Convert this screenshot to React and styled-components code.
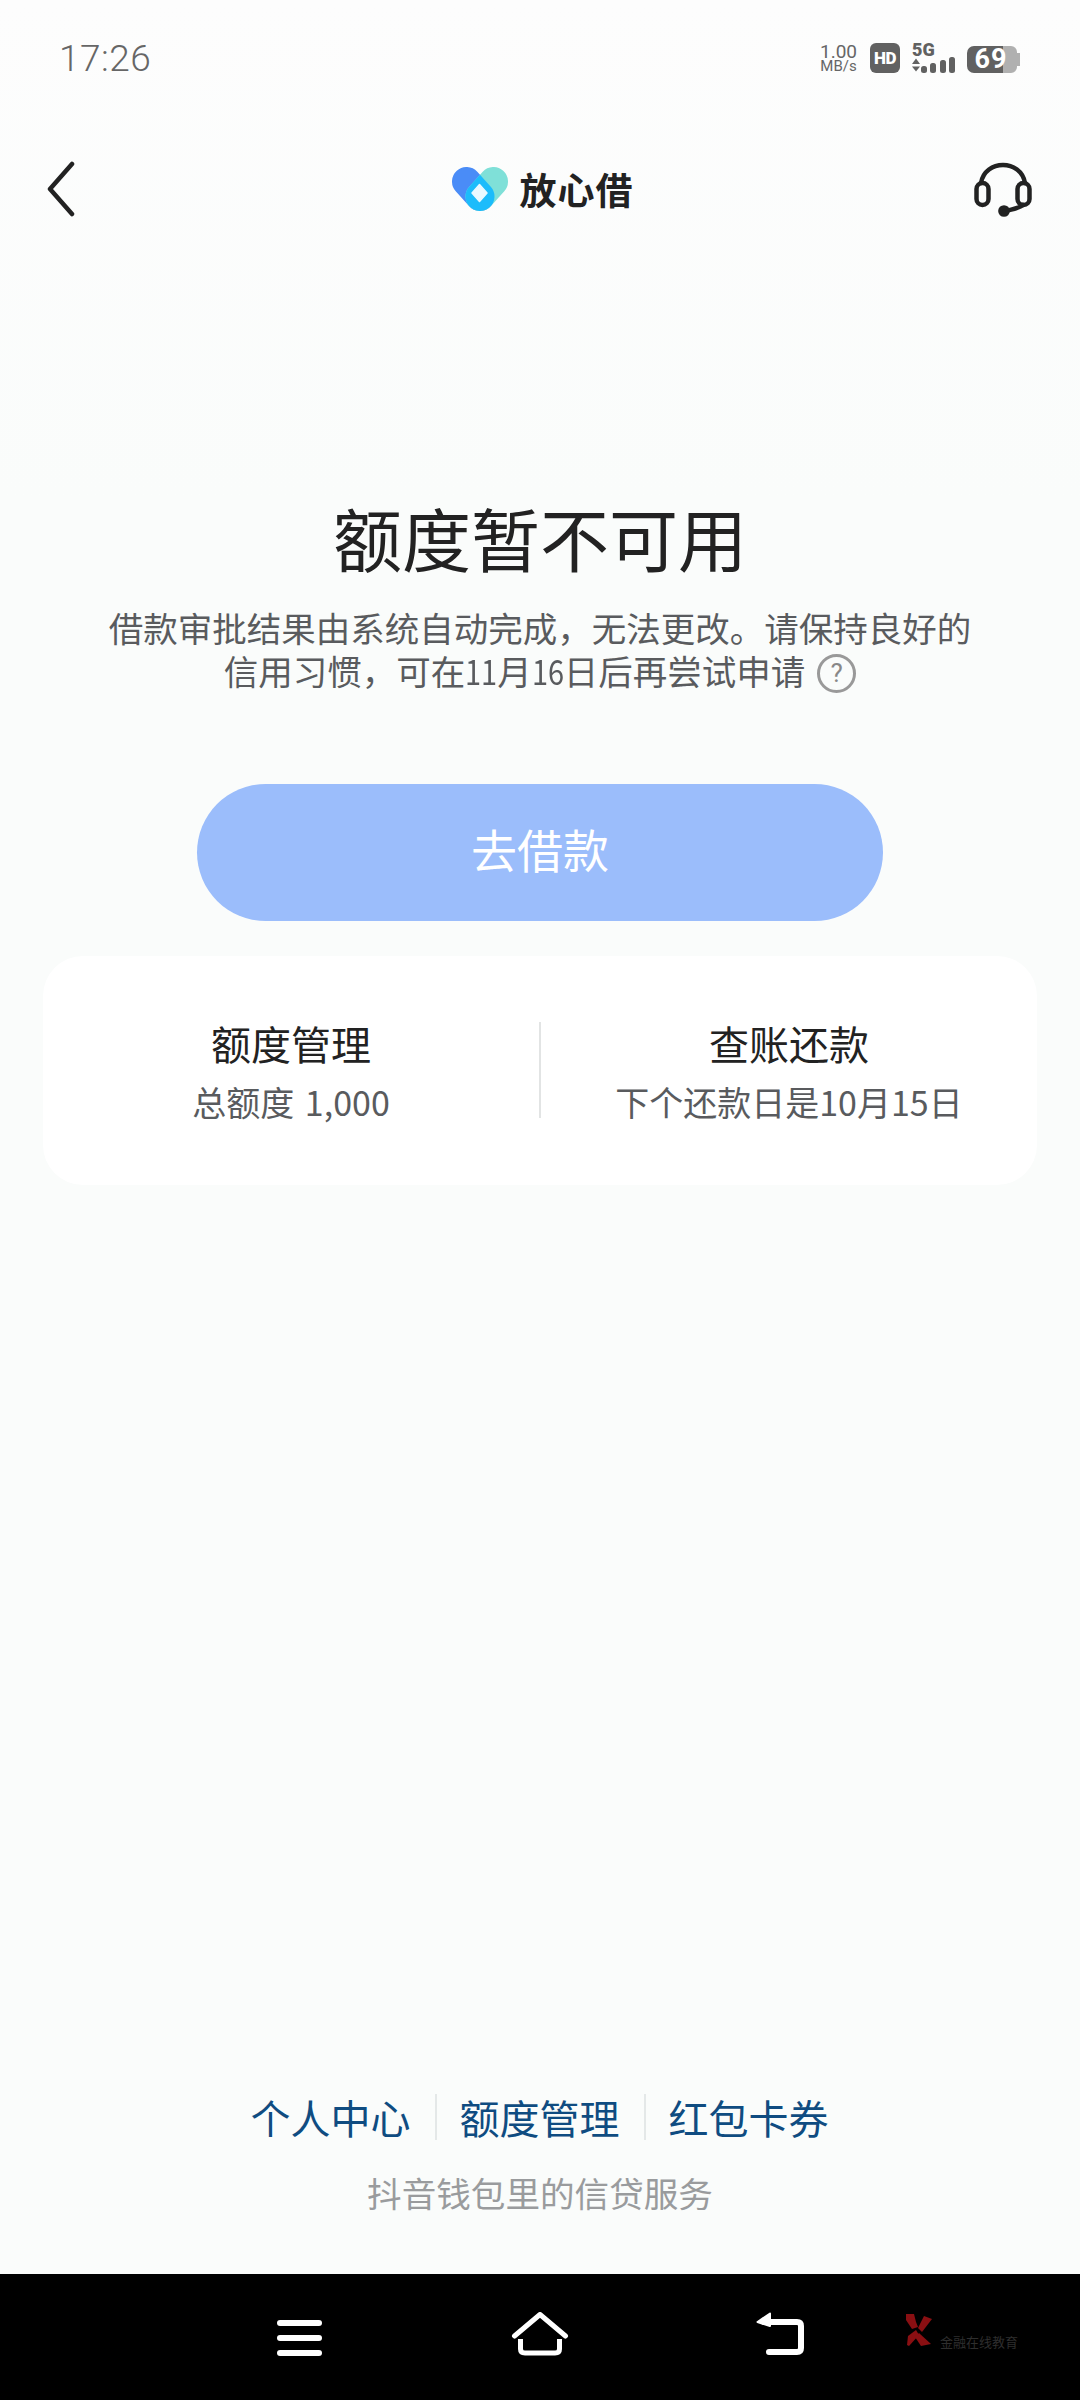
import React from "react";
import styled, { createGlobalStyle } from "styled-components";

const Global = createGlobalStyle`
  html, body { margin: 0; padding: 0; background: #fafcfb; }
  * { box-sizing: border-box; }
`;
const CJK = `"Noto Sans CJK SC", "Noto Sans", sans-serif`;

const Page = styled.div`
  width: 1080px; height: 2400px; display: flex; flex-direction: column;
  background: linear-gradient(#fdfdfd 0, #fafcfb 500px); font-family: ${CJK}; overflow: hidden;
`;
const StatusBar = styled.div`
  height: 116px; display: flex; align-items: center; justify-content: space-between;
  padding: 0 59px 0 59px; color: #666;
`;
const Time = styled.span`
  font: 300 37px/1 Roboto, sans-serif; letter-spacing: 0.5px; color: #666;
`;
const StatusIcons = styled.div`display: flex; align-items: flex-end; gap: 12px; height: 30px;`;
const Speed = styled.div`
  display: flex; flex-direction: column; align-items: center; width: 39px;
  font-family: Roboto, sans-serif; color: #666; font-weight: 400;
  span:first-child { font-size: 19px; line-height: 17px; }
  span:last-child { font-size: 15px; line-height: 13px; }
`;
const HdBadge = styled.div`
  width: 30px; height: 30px; border-radius: 6px; background: #616161; color: #fff;
  display: flex; align-items: center; justify-content: center;
  font: 900 17px/1 Roboto, sans-serif; letter-spacing: -0.5px;
`;
const SignalBox = styled.div`position: relative; width: 46px; height: 30px; display: flex;`;
const SignalLabel = styled.span`
  position: absolute; left: 0; top: -1px; font: 900 18px/16px Roboto, sans-serif; color: #616161;
`;
const BatteryBox = styled.div`
  position: relative; width: 54px; height: 27px; margin-left: -3px;
`;
const BatteryNum = styled.span`
  position: absolute; left: 7px; top: 0; width: 34px; text-align: center;
  font: 700 27px/27px Roboto, sans-serif; color: #fff; letter-spacing: 1px;
`;
const Nav = styled.header`
  height: 146px; display: grid; grid-template-columns: 1fr auto 1fr; align-items: center;
  padding: 0 47px 0 45px;
`;
const NavEnd = styled.div`justify-self: end; display: flex;`;
const NavStart = styled.div`justify-self: start; display: flex;`;
const Brand = styled.div`display: flex; align-items: center; gap: 12px; margin-left: 7px;`;
const BrandName = styled.span`
  font: 700 37px/1 ${CJK}; color: #222; letter-spacing: 1px;
`;
const Main = styled.main`
  display: flex; flex-direction: column; align-items: center; padding-top: 228px;
`;
const Title = styled.h1`
  margin: 0; font: 400 69px/94px ${CJK}; color: #222;
`;
const Desc = styled.p`
  margin: 22px 0 0; width: 900px; text-align: center;
  font: 400 34.5px/43px ${CJK}; color: #595b5e;
`;
const Digits = styled.span`
  display: inline-block; width: 32px; white-space: nowrap;
  transform: scaleX(0.84); transform-origin: left center;
`;
const HelpIcon = styled.span`
  display: inline-flex; align-items: center; justify-content: center; vertical-align: 3px;
  width: 39px; height: 39px; margin-left: 12px; border-radius: 50%; border: 3px solid #999;
  font: 400 26px/1 Roboto, sans-serif; color: #888;
`;
const BorrowButton = styled.button`
  width: 686px; height: 137px; margin-top: 91px; padding: 0 0 8px; border: 0; border-radius: 69px;
  background: #9bbdfb; color: #fff; font: 400 46px/1 ${CJK};
`;
const Card = styled.section`
  width: 994px; height: 229px; margin-top: 35px; border-radius: 40px; background: #fff;
  display: grid; grid-template-columns: 1fr 2px 1fr; align-items: center;
`;
const Divider = styled.div`width: 2px; height: 96px; background: #e2e4e4;`;
const CardCell = styled.div`
  display: flex; flex-direction: column; align-items: center;
`;
const CellTitle = styled.div`font: 400 40px/56px ${CJK}; color: #222;`;
const CellSub = styled.div`font: 400 34px/46px ${CJK}; color: #595b5e; margin-top: 8px; word-spacing: 3px;`;
const Footer = styled.footer`
  margin-top: auto; display: flex; flex-direction: column; align-items: center; padding-bottom: 58px;
`;
const LinkRow = styled.nav`display: flex; align-items: center;`;
const FooterLink = styled.a`
  font: 400 40px/46px ${CJK}; color: #0f4c81; padding: 0 24px 0 23px;
  & + & { border-left: 2px solid #e4e8e8; }
`;
const Tagline = styled.div`font: 400 34.6px/48px ${CJK}; color: #999b9d; margin-top: 28.5px;`;
const SystemBar = styled.div`
  height: 126px; background: #000; display: flex; align-items: center; position: relative;
  padding: 0 0 6px 277px;
`;
const NavSlot = styled.div`display: flex; align-items: flex-end; height: 44px; width: ${p => p.$w}px;`;
const Watermark = styled.div`
  position: absolute; left: 904px; top: 40px; display: flex; align-items: flex-end; gap: 6px;
`;
const WatermarkText = styled.span`font: 400 13px/1 ${CJK}; color: #2e2e2e;`;

const Chevron = () => (
  <svg width="30" height="56" viewBox="0 0 30 56" fill="none">
    <path d="M27 3 L5 28 L27 53" stroke="#222" strokeWidth="4.5" strokeLinecap="round" strokeLinejoin="round"/>
  </svg>
);
const Headset = () => (
  <svg width="60" height="56" viewBox="0 0 60 56" fill="none" stroke="#222" strokeWidth="4.5" strokeLinecap="round">
    <path d="M8 22 C12 -2 48 -2 52 22"/>
    <rect x="3.5" y="22" width="12" height="22" rx="6"/>
    <rect x="44.5" y="22" width="12" height="22" rx="6"/>
    <path d="M50 44 C47 47 40 48 33 50"/>
    <circle cx="31" cy="50" r="3.6" fill="#222"/>
  </svg>
);
const Logo = () => (
  <svg width="56" height="44" viewBox="0 0 56 44" fill="none" strokeWidth="29" strokeLinecap="round">
    <defs>
      <mask id="logo-overlap" maskUnits="userSpaceOnUse" x="0" y="0" width="56" height="44">
        <line x1="14.500" y1="14.500" x2="28" y2="29.500" stroke="#fff"/>
      </mask>
    </defs>
    <line x1="14.500" y1="14.500" x2="28" y2="29.500" stroke="#4a8cf7"/>
    <line x1="41.500" y1="14.500" x2="28" y2="29.500" stroke="#7fe0d8"/>
    <g mask="url(#logo-overlap)">
      <line x1="41.500" y1="14.500" x2="28" y2="29.500" stroke="#1cbcfb"/>
    </g>
    <path d="M27.500 17.500 L35 26 L27.500 34.500 L20 26Z" fill="#eaf9ff" stroke="#eaf9ff" strokeWidth="1.500" strokeLinejoin="round"/>
  </svg>
);
const Signal = () => (
  <SignalBox>
    <svg width="46" height="30" viewBox="0 0 46 30" fill="#616161">
      <path d="M4 15.500 L8 21 H0Z"/>
      <path d="M0 23.500 H8 L4 28.500Z"/>
      <rect x="9" y="23" width="6" height="7" rx="2.500"/>
      <rect x="18" y="20" width="6" height="10" rx="2.500"/>
      <rect x="28" y="17" width="6" height="13" rx="2.500"/>
      <rect x="37" y="14" width="6" height="16" rx="2.500"/>
    </svg>
    <SignalLabel>5G</SignalLabel>
  </SignalBox>
);
const Battery = () => (
  <svg width="54" height="27" viewBox="0 0 54 27">
    <path d="M7 0 H36 V27 H7 A7 7 0 0 1 0 20 V7 A7 7 0 0 1 7 0Z" fill="#616161"/>
    <path d="M36 0 H44 A6 6 0 0 1 50 6 V7 H53 V20 H50 V21 A6 6 0 0 1 44 27 H36Z" fill="#b0b0b0"/>
  </svg>
);
const MenuGlyph = () => (
  <svg width="46" height="36" viewBox="0 0 46 36" fill="#fff">
    <rect x="0" y="0" width="45" height="6" rx="3"/><rect x="0" y="15" width="45" height="6" rx="3"/><rect x="0" y="30" width="45" height="6" rx="3"/>
  </svg>
);
const HomeGlyph = () => (
  <svg width="58" height="44" viewBox="0 0 58 44" fill="none" stroke="#fff" strokeWidth="5" strokeLinecap="round" strokeLinejoin="round">
    <path d="M3.500 24 L29 2.500 L54.500 24"/>
    <path d="M9.500 27 V37 Q9.500 41 14 41 H44 Q48.500 41 48.500 37 V27" strokeLinecap="butt"/>
  </svg>
);
const BackGlyph = () => (
  <svg width="48" height="44" viewBox="0 0 48 44" fill="none" stroke="#fff" strokeWidth="6" strokeLinecap="round" strokeLinejoin="round">
    <path d="M8 10 H41 Q45 10 45 14 V36 Q45 40 41 40 H13"/>
    <path d="M14 1.500 L1.500 10 L14 14Z" fill="#fff" stroke="#fff" strokeWidth="2"/>
  </svg>
);
const WatermarkLogo = () => (
  <svg width="30" height="34" viewBox="0 0 30 34" fill="#8a0f12">
    <path d="M2 0 H10 L12 8 L14 13 L8 15 L2 6Z"/>
    <path d="M20 2 L28 5 L18 18 L14 14Z"/>
    <path d="M12 16 L15 21 L5 32 L3 31 L4 22Z"/>
    <path d="M15 19 L27 30 L17 32 L11 23Z"/>
  </svg>
);

export default function App() {
  return (
    <Page>
      <Global />
      <StatusBar>
        <Time>17:26</Time>
        <StatusIcons>
          <Speed><span>1.00</span><span>MB/s</span></Speed>
          <HdBadge>HD</HdBadge>
          <Signal />
          <BatteryBox><Battery /><BatteryNum>69</BatteryNum></BatteryBox>
        </StatusIcons>
      </StatusBar>
      <Nav>
        <NavStart><Chevron /></NavStart>
        <Brand><Logo /><BrandName>放心借</BrandName></Brand>
        <NavEnd><Headset /></NavEnd>
      </Nav>
      <Main>
        <Title>额度暂不可用</Title>
        <Desc>借款审批结果由系统自动完成，无法更改。请保持良好的<br />信用习惯，可在<Digits>11</Digits>月<Digits>16</Digits>日后再尝试申请<HelpIcon>?</HelpIcon></Desc>
        <BorrowButton>去借款</BorrowButton>
        <Card>
          <CardCell>
            <CellTitle>额度管理</CellTitle>
            <CellSub>总额度 1,000</CellSub>
          </CardCell>
          <Divider />
          <CardCell>
            <CellTitle>查账还款</CellTitle>
            <CellSub>下个还款日是10月15日</CellSub>
          </CardCell>
        </Card>
      </Main>
      <Footer>
        <LinkRow>
          <FooterLink>个人中心</FooterLink>
          <FooterLink>额度管理</FooterLink>
          <FooterLink>红包卡券</FooterLink>
        </LinkRow>
        <Tagline>抖音钱包里的信贷服务</Tagline>
      </Footer>
      <SystemBar>
        <NavSlot $w={234}><MenuGlyph /></NavSlot>
        <NavSlot $w={245}><HomeGlyph /></NavSlot>
        <NavSlot $w={60}><BackGlyph /></NavSlot>
        <Watermark><WatermarkLogo /><WatermarkText>金融在线教育</WatermarkText></Watermark>
      </SystemBar>
    </Page>
  );
}
